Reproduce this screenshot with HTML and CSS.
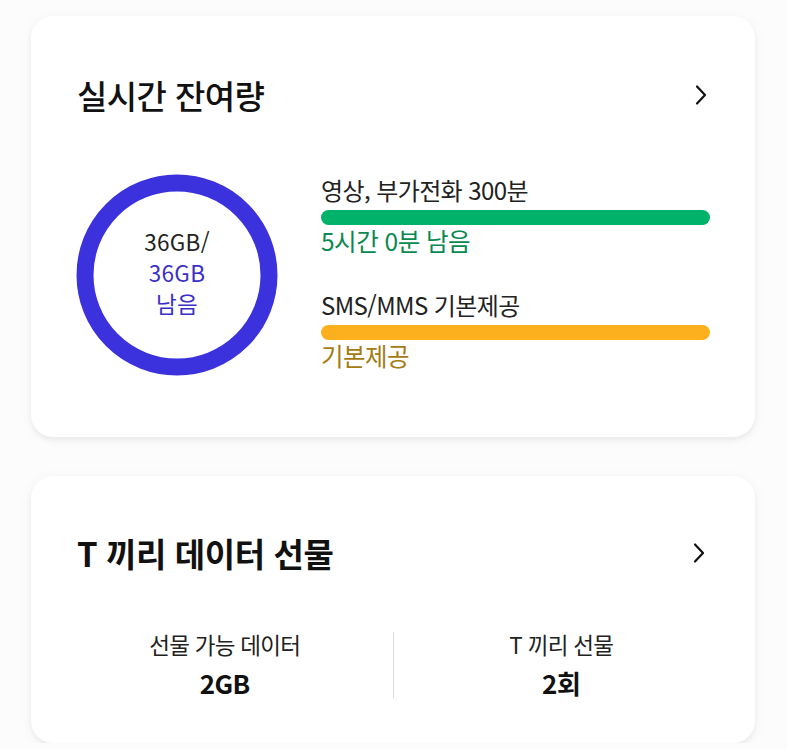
FILE: index.html
```html
<!DOCTYPE html>
<html lang="ko">
<head>
<meta charset="utf-8">
<link rel="stylesheet" href="styles.css">
</head>
<body>
<div class="page">
  <section class="card card-usage">
    <div class="card-head">
      <h2 class="title title-medium">실시간 잔여량</h2>
      <svg class="chev" width="14" height="22" viewBox="0 0 14 22"><path d="M3 2.5 L11 11 L3 19.5" fill="none" stroke="#111" stroke-width="2.2" stroke-linecap="round" stroke-linejoin="round"/></svg>
    </div>
    <div class="usage">
      <div class="ring">
        <svg width="206" height="206" viewBox="0 0 206 206">
          <circle cx="103" cy="103" r="92" fill="none" stroke="#3b31dd" stroke-width="17"/>
        </svg>
        <div class="ring-text">
          <div class="ring-total">36GB/</div>
          <div class="ring-left">36GB</div>
          <div class="ring-left">남음</div>
        </div>
      </div>
      <div class="bars">
        <div class="bar-item">
          <div class="bar-label">영상, 부가전화 300분</div>
          <div class="bar bar-green"></div>
          <div class="bar-remain remain-green">5시간 0분 남음</div>
        </div>
        <div class="bar-item bar-item-2">
          <div class="bar-label">SMS/MMS 기본제공</div>
          <div class="bar bar-orange"></div>
          <div class="bar-remain remain-orange">기본제공</div>
        </div>
      </div>
    </div>
  </section>

  <section class="card card-gift">
    <div class="card-head">
      <h2 class="title title-bold">T 끼리 데이터 선물</h2>
      <svg class="chev" width="14" height="22" viewBox="0 0 14 22"><path d="M3 2.5 L11 11 L3 19.5" fill="none" stroke="#111" stroke-width="2.2" stroke-linecap="round" stroke-linejoin="round"/></svg>
    </div>
    <div class="stats">
      <div class="stat">
        <div class="stat-label">선물 가능 데이터</div>
        <div class="stat-value">2GB</div>
      </div>
      <div class="divider"></div>
      <div class="stat">
        <div class="stat-label">T 끼리 선물</div>
        <div class="stat-value">2회</div>
      </div>
    </div>
  </section>
</div>
</body>
</html>
```

FILE: styles.css
```css
* { box-sizing: border-box; }
html, body {
  margin: 0;
  padding: 0;
  background: #fdfcfd;
}
body {
  font-family: "Noto Sans CJK KR", "Noto Sans", sans-serif;
  color: #1a1a1a;
}
.page {
  width: 787px;
  padding: 16px 0 0 31px;
  display: flex;
  flex-direction: column;
  gap: 39px;
}
.card {
  width: 724px;
  background: #fff;
  border-radius: 22px;
  box-shadow: 0 3px 5px rgba(0,0,0,0.05), 0 2px 14px rgba(40,0,40,0.045);
}
.card-usage {
  height: 421px;
  padding: 59px 45px 0 45px;
}
.card-gift {
  height: 267px;
  padding: 57px 26px 0 26px;
}
.card-head {
  display: flex;
  align-items: center;
  justify-content: space-between;
  height: 40px;
  padding-left: 1px;
  padding-right: 2px;
}
.card-gift .card-head {
  padding-left: 20px;
  padding-right: 23px;
}
.title {
  margin: 0;
  font-size: 33px;
  line-height: 40px;
  color: #111;
  letter-spacing: -0.6px;
}
.title-medium { font-weight: 500; }
.title-bold { font-weight: 700; font-size: 33px; letter-spacing: -0.4px; }
.chev { display: block; }

.usage {
  display: flex;
  align-items: flex-start;
  margin-top: 57px;
}
.ring {
  width: 206px;
  height: 206px;
  position: relative;
  flex: none;
  margin-left: -2px;
}
.ring svg { display: block; }
.ring-text {
  position: absolute;
  inset: 0;
  display: flex;
  flex-direction: column;
  align-items: center;
  justify-content: center;
  padding-bottom: 6px;
  font-size: 22.5px;
  line-height: 31px;
  letter-spacing: 0.3px;
}
.ring-total { color: #222; }
.ring-left { color: #3a2fc6; }

.bars {
  margin-left: 41px;
  margin-top: 4px;
  width: 389px;
  display: flex;
  flex-direction: column;
}
.bar-item-2 { margin-top: 34px; }
.bar-label {
  font-size: 24px;
  line-height: 28px;
  color: #222;
  letter-spacing: -0.6px;
}
.bar {
  height: 15px;
  border-radius: 8px;
  margin-top: 6px;
}
.bar-green { background: #00b26a; }
.bar-orange { background: #fcb01d; }
.bar-remain {
  font-size: 24.5px;
  line-height: 32px;
  letter-spacing: -0.5px;
}
.remain-green { color: #0a8950; }
.remain-orange { color: #a57b13; }

.stats {
  display: flex;
  margin-top: 59px;
}
.stat {
  flex: 1;
  display: flex;
  flex-direction: column;
  align-items: center;
}
.stat-label {
  font-size: 22.5px;
  line-height: 24px;
  color: #222;
  letter-spacing: -0.7px;
}
.stat-value {
  margin-top: 12px;
  font-size: 26px;
  line-height: 30px;
  font-weight: 700;
  color: #111;
  letter-spacing: -0.5px;
}
.divider {
  width: 1px;
  background: #dcdcdc;
  align-self: stretch;
  height: 66px;
}
```
